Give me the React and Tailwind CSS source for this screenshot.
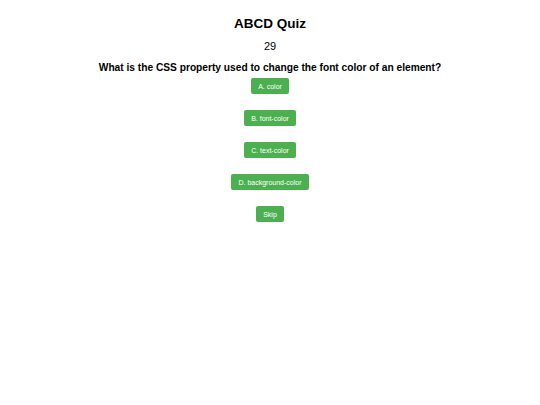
export default function App() {
  const options = ["A. color", "B. font-color", "C. text-color", "D. background-color"];
  return (
    <div className="min-h-screen bg-white flex flex-col items-center text-black" style={{ fontFamily: '"Liberation Sans", Arial, sans-serif' }}>
      <h1 className="mt-[15px] text-[13.5px] font-bold leading-[18px]">ABCD Quiz</h1>
      <div className="mt-[7px] text-[11px] leading-[13px]">29</div>
      <h2 className="mt-[9px] text-[10.2px] font-bold leading-[12px]">
        What is the CSS property used to change the font color of an element?
      </h2>
      <div className="mt-[4px] flex flex-col items-center gap-[16px]">
        {options.map((o) => (
          <button key={o} className="bg-[#4caf50] text-white text-[7px] leading-[9px] px-[7.5px] py-[3.5px] rounded-[2px]">
            {o}
          </button>
        ))}
        <button className="bg-[#4caf50] text-white text-[7px] leading-[9px] px-[7.5px] py-[3.5px] rounded-[2px]">Skip</button>
      </div>
    </div>
  );
}
